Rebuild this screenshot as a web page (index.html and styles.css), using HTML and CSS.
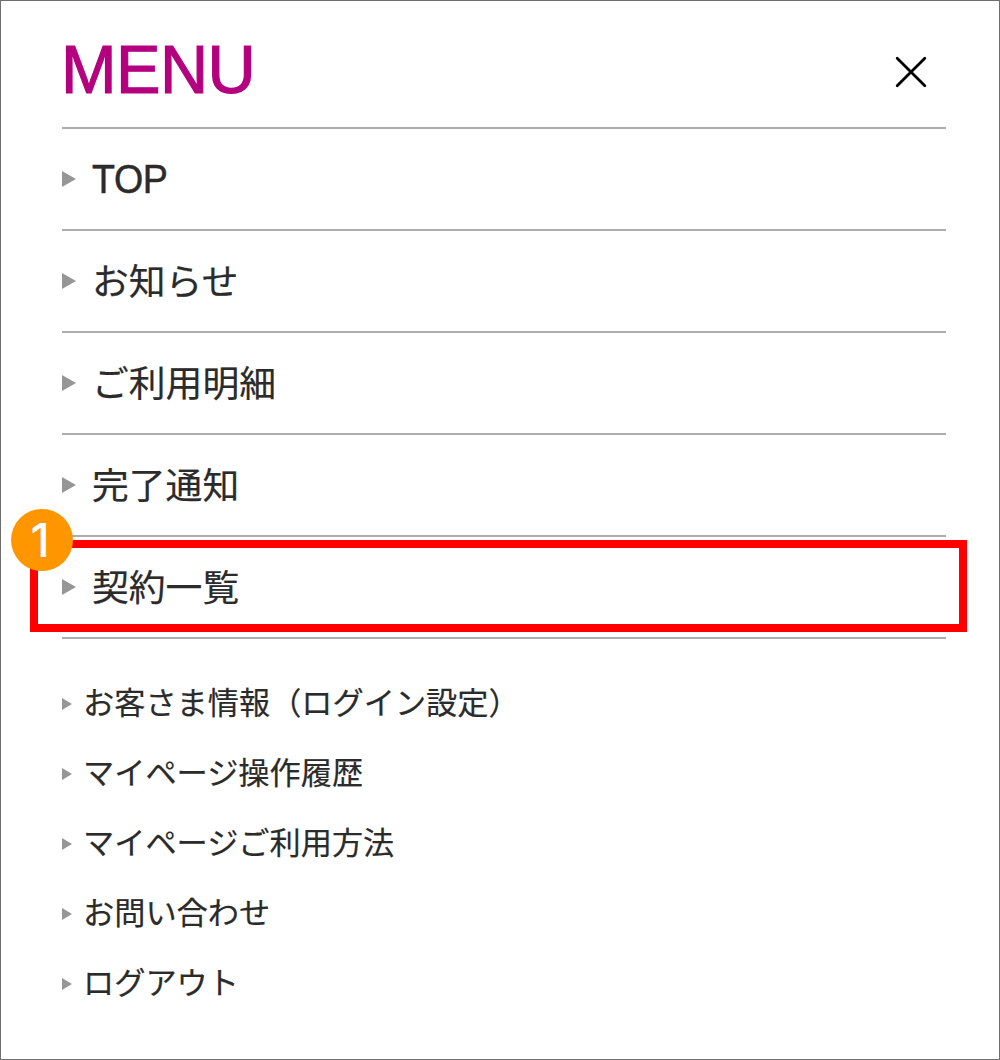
FILE: index.html
```html
<!DOCTYPE html>
<html lang="ja">
<head>
<meta charset="utf-8">
<title>MENU</title>
<link rel="stylesheet" href="styles.css">
</head>
<body>
<div class="panel">
  <header class="header">
    <h1 class="title">MENU</h1>
    <button class="close" type="button" aria-label="閉じる">
      <svg width="32" height="32" viewBox="0 0 32 32"><path d="M2.2 2.2 29.8 29.8M29.8 2.2 2.2 29.8" fill="none" stroke="#000" stroke-width="2.8" stroke-linecap="round"/></svg>
    </button>
  </header>
  <nav>
    <ul class="main">
      <li class="row"><a class="latin">TOP</a></li>
      <li class="row"><a class="label">お知らせ</a></li>
      <li class="row"><a class="label">ご利用明細</a></li>
      <li class="row"><a class="label">完了通知</a></li>
      <li class="row"><a class="label">契約一覧</a><span class="highlight"></span><span class="badge">1</span></li>
    </ul>
    <ul class="sub">
      <li class="subrow"><a class="sublabel">お客さま情報（ログイン設定）</a></li>
      <li class="subrow"><a class="sublabel">マイページ操作履歴</a></li>
      <li class="subrow"><a class="sublabel">マイページご利用方法</a></li>
      <li class="subrow"><a class="sublabel">お問い合わせ</a></li>
      <li class="subrow"><a class="sublabel">ログアウト</a></li>
    </ul>
  </nav>
</div>
</body>
</html>
```

FILE: styles.css
```css
* { box-sizing: border-box; }
body {
  margin: 0;
  background: #fff;
  color: #2b2b2b;
  font-family: "Liberation Sans", "Noto Sans CJK JP", sans-serif;
}
.panel {
  height: 1060px;
  padding: 0 53px 0 61px;
  border: 1px solid #6e6e6e;
}
.header {
  display: flex;
  justify-content: space-between;
  height: 128px;
  padding-right: 19px;
  border-bottom: 2px solid #adadad;
}
.title {
  margin: 0 0 0 -1px;
  padding-top: 29px;
  color: #b4007f;
  font-size: 69px;
  font-weight: 400;
  line-height: 80px;
  letter-spacing: -0.6px;
  transform: scaleX(0.967);
  transform-origin: 0 50%;
  -webkit-text-stroke: 1.2px #b4007f;
}
.close {
  display: flex;
  width: 32px;
  height: 32px;
  margin-top: 55px;
  padding: 0;
  border: 0;
  background: none;
}
.main, .sub { margin: 0; padding: 0; list-style: none; }
.row {
  position: relative;
  display: flex;
  align-items: center;
  gap: 16px;
  height: 102px;
  border-bottom: 2px solid #adadad;
  font: 36.8px/60px "Noto Sans CJK JP", sans-serif;
}
.row::before, .subrow::before {
  content: "";
  width: 14px;
  height: 16px;
  background: #969696;
  clip-path: polygon(0 0, 100% 50%, 0 100%);
}
.label {
  padding-bottom: 5px;
  -webkit-text-stroke: 0.2px #2b2b2b;
}
.latin {
  font: 40px/60px "Liberation Sans", sans-serif;
  letter-spacing: -0.4px;
  transform: scaleX(0.94);
  transform-origin: 0 50%;
  -webkit-text-stroke: 0.5px #2b2b2b;
}
.sub { padding-top: 30px; }
.subrow {
  display: flex;
  align-items: center;
  gap: 11px;
  height: 70px;
  font: 31.2px/60px "Noto Sans CJK JP", sans-serif;
}
.subrow::before { width: 10px; height: 12px; }
.sublabel {
  padding-bottom: 6px;
  -webkit-text-stroke: 0.2px #2b2b2b;
}
.highlight {
  position: absolute;
  top: 3px;
  left: -32px;
  width: 937px;
  height: 92px;
  border: 8px solid #f00;
}
.badge {
  position: absolute;
  top: -28px;
  left: -51px;
  width: 62px;
  height: 62px;
  padding-right: 4px;
  border-radius: 50%;
  background: #ff9600;
  color: #fff;
  font: 500 46px/62px Inter, sans-serif;
  text-align: center;
}
```
